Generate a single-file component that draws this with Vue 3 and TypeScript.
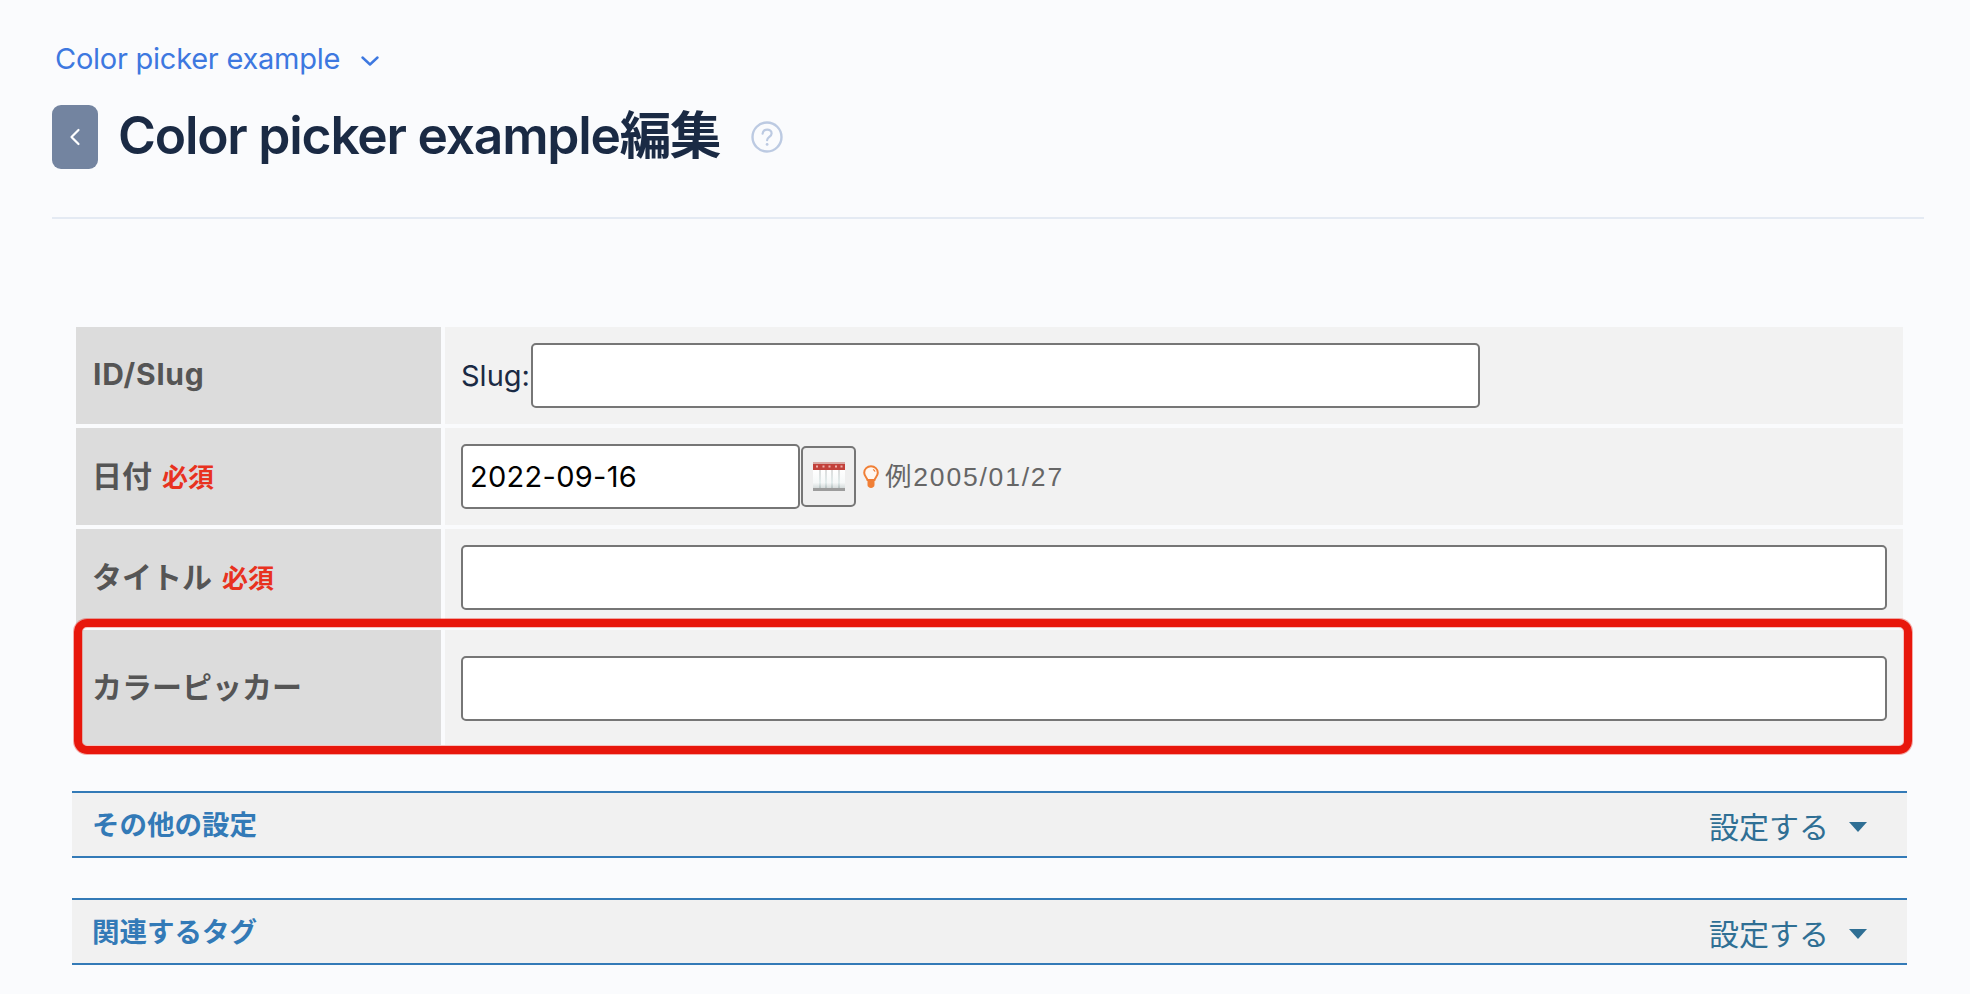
<script setup lang="ts">
const rows = [
  { label: 'タイトル', required: true },
]
const sections = ['その他の設定', '関連するタグ']
</script>

<template>
  <div class="page">
    <div class="crumb">
      <span>Color picker example</span>
      <svg class="crumb-chev" width="18" height="10" viewBox="0 0 18 10"><path d="M1.5 1.5 9 8.5 16.5 1.5" fill="none" stroke="#3d78e0" stroke-width="2.4" stroke-linecap="round" stroke-linejoin="round"/></svg>
    </div>
    <div class="head">
      <button class="back" type="button" aria-label="back">
        <svg width="12" height="20" viewBox="0 0 12 20"><path d="M9.5 3 2.5 10 9.5 17" fill="none" stroke="#fff" stroke-width="2.2" stroke-linecap="round" stroke-linejoin="round"/></svg>
      </button>
      <h1 class="title">Color picker example編集</h1>
      <svg class="help" width="32" height="32" viewBox="0 0 32 32">
        <circle cx="16" cy="16" r="14.5" fill="none" stroke="#bccae2" stroke-width="2.4"/>
        <path d="M11.6 12.6c.3-2.5 2.2-4 4.6-4 2.500 0 4.400 1.600 4.400 3.800 0 3.300-4.500 3.500-4.500 6.800" fill="none" stroke="#bccae2" stroke-width="2.200" stroke-linecap="round"/>
        <circle cx="16.100" cy="23.400" r="1.400" fill="#bccae2"/>
      </svg>
    </div>
    <div class="divider"></div>

    <div class="table">
      <div class="row">
        <div class="th"><span class="th-text th-latin">ID/Slug</span></div>
        <div class="td">
          <label class="slug">Slug:</label>
          <input class="input slug-input" type="text" />
        </div>
      </div>
      <div class="row">
        <div class="th"><span class="th-text">日付 <span class="req">必須</span></span></div>
        <div class="td">
          <input class="input date-input" type="text" value="2022-09-16" />
          <button class="cal" type="button" aria-label="calendar">
            <svg width="32" height="29" viewBox="0 0 32 29">
              <defs>
                <linearGradient id="calBody" x1="0" y1="0" x2="0" y2="1">
                  <stop offset="0" stop-color="#ffffff"/>
                  <stop offset="0.7" stop-color="#f6f8f8"/>
                  <stop offset="1" stop-color="#d5dbdb"/>
                </linearGradient>
                <linearGradient id="calCol" x1="0" y1="0" x2="0" y2="1">
                  <stop offset="0" stop-color="#dcdcdc"/>
                  <stop offset="0.7" stop-color="#e2ecec"/>
                  <stop offset="1" stop-color="#b8c2c2"/>
                </linearGradient>
              </defs>
              <rect x="0" y="0" width="32" height="2" fill="#d8a8a4"/>
              <rect x="0" y="2" width="32" height="6" fill="#c2403a"/>
              <rect x="0" y="8" width="32" height="18" fill="url(#calBody)"/>
              <rect x="6" y="8" width="2" height="18" fill="url(#calCol)"/>
              <rect x="12" y="8" width="2" height="18" fill="url(#calCol)"/>
              <rect x="18" y="8" width="2" height="18" fill="url(#calCol)"/>
              <rect x="25" y="8" width="2" height="18" fill="url(#calCol)"/>
              <rect x="0" y="26" width="32" height="3" fill="#9c9c9c"/>
              <path d="M3 4.500h2M9.500 4.500h2M15.500 4.500h2M22 4.500h2M27.500 4.500h2" stroke="#eeb0ac" stroke-width="2"/>
            </svg>
          </button>
          <svg class="bulb" width="16" height="23" viewBox="0 0 16 23">
            <path d="M8 1.200c-3.800 0-6.800 2.900-6.800 6.500 0 3.400 2.700 4.800 3.300 7.300h7c.6-2.500 3.300-3.900 3.300-7.300 0-3.600-3-6.500-6.800-6.500z" fill="#fff7f0" stroke="#f07f36" stroke-width="2"/>
            <path d="M4.500 15.500h7v4.500c0 1.600-1.600 3-3.500 3s-3.500-1.400-3.500-3z" fill="#f07f36"/>
            <path d="M10 4.500c1 .4 1.800 1.200 2 2.200" fill="none" stroke="#f07f36" stroke-width="1.200"/>
          </svg>
          <span class="hint">例2005/01/27</span>
        </div>
      </div>
      <div v-for="r in rows" :key="r.label" class="row">
        <div class="th"><span class="th-text">{{ r.label }} <span v-if="r.required" class="req">必須</span></span></div>
        <div class="td"><input class="input full-input" type="text" /></div>
      </div>
      <div class="row row-tall">
        <div class="th"><span class="th-text th-tall">カラーピッカー</span></div>
        <div class="td td-tall"><input class="input full-input" type="text" /></div>
        <div class="mark"></div>
      </div>
    </div>

    <div v-for="s in sections" :key="s" class="section">
      <div class="section-title">{{ s }}</div>
      <div class="section-action">
        <span>設定する</span>
        <span class="tri"></span>
      </div>
    </div>
  </div>
</template>

<style>
html, body { margin: 0; background: #fafbfd; }
</style>

<style scoped>
.page {
  width: 1970px;
  height: 994px;
  box-sizing: border-box;
  overflow: hidden;
  padding: 38px 46px 0 52px;
  background: #fafbfd;
  font-family: "Inter", "Noto Sans CJK JP", sans-serif;
}
.crumb {
  display: flex;
  align-items: center;
  height: 40px;
  padding-left: 3px;
  color: #3d78e0;
  font-size: 29px;
  letter-spacing: -0.25px;
}
.crumb-chev { margin-left: 21px; margin-top: 6px; }
.head {
  display: flex;
  align-items: center;
  height: 64px;
  margin-top: 27px;
}
.back {
  width: 46px;
  height: 64px;
  display: flex;
  align-items: center;
  justify-content: center;
  padding: 0;
  border: 0;
  border-radius: 9px;
  background: #7384a0;
}
.title {
  margin: -4px 0 0 20px;
  font-size: 51.5px;
  font-weight: 600;
  color: #1a2a44;
  letter-spacing: -1.2px;
  line-height: 64px;
  white-space: nowrap;
}
.help { margin-left: 31px; margin-top: 0; }
.divider {
  height: 2px;
  margin-top: 48px;
  background: #e4eaf3;
}
.table {
  margin: 108px 0 0 24px;
  width: 1827px;
  display: flex;
  flex-direction: column;
  gap: 4px;
}
.row {
  position: relative;
  display: flex;
  gap: 4px;
  height: 97px;
}
.row-tall { height: 115px; }
.th {
  width: 365px;
  flex: none;
  box-sizing: border-box;
  padding-left: 16px;
  display: flex;
  align-items: center;
  background: #dcdcdc;
  color: #555;
  font-size: 30px;
  font-weight: 700;
}
.th-text {
  margin-top: -6px;
  white-space: pre;
}
.th-latin {
  margin-top: -3px;
  letter-spacing: 0.8px;
  margin-left: 1px;
}
.th-tall { margin-top: -5px; }
.req {
  margin-left: 3px;
  color: #e8321f;
  font-size: 26px;
}
.td {
  flex: 1;
  box-sizing: border-box;
  padding: 0 16px;
  display: flex;
  align-items: center;
  background: #f2f2f2;
}
.td-tall { padding-top: 1px; }
.slug {
  color: #1a2a44;
  font-size: 29px;
  margin-right: 1px;
}
.input {
  box-sizing: border-box;
  height: 65px;
  padding: 0 7px;
  border: 2px solid #767676;
  border-radius: 5px;
  background: #fff;
  color: #000;
  font-family: inherit;
  font-size: 29px;
  outline: none;
}
.slug-input { width: 949px; }
.date-input { width: 339px; letter-spacing: 0.3px; }
.full-input { flex: 1; min-width: 0; }
.cal {
  box-sizing: border-box;
  width: 55px;
  height: 61px;
  margin-left: 1px;
  padding: 0;
  display: flex;
  align-items: center;
  justify-content: center;
  border: 2px solid #767676;
  border-radius: 5px;
  background: #efefef;
}
.bulb { margin-left: 7px; }
.hint {
  margin-left: 6px;
  margin-top: -4px;
  color: #666;
  font-family: "Liberation Sans", "Noto Sans CJK JP", sans-serif;
  font-size: 26.5px;
  letter-spacing: 1.8px;
}
.mark {
  position: absolute;
  top: -11px;
  bottom: -9px;
  left: -2px;
  right: -9px;
  box-sizing: border-box;
  border: 8px solid #e8170c;
  border-radius: 13px;
  box-shadow: 0 0 0 1px rgba(232, 23, 12, 0.35), inset 0 0 0 1px rgba(232, 23, 12, 0.25);
  pointer-events: none;
}
.section {
  display: flex;
  align-items: center;
  justify-content: space-between;
  box-sizing: border-box;
  width: 1835px;
  height: 67px;
  margin: 40px 0 0 20px;
  padding: 0 40px 0 20px;
  border-top: 2px solid #337ab7;
  border-bottom: 2px solid #337ab7;
  background: #f1f1f1;
}
.table + .section { margin-top: 46px; }
.section-title {
  color: #337ab7;
  font-size: 27.5px;
  font-weight: 700;
  margin-top: -4px;
}
.section-action {
  display: flex;
  align-items: center;
  color: #2f6f94;
  font-size: 30px;
  margin-top: 1px;
}
.tri {
  width: 0;
  height: 0;
  margin-left: 20px;
  margin-top: 4px;
  border-left: 9.5px solid transparent;
  border-right: 9.5px solid transparent;
  border-top: 10px solid #2f6f94;
}
</style>
